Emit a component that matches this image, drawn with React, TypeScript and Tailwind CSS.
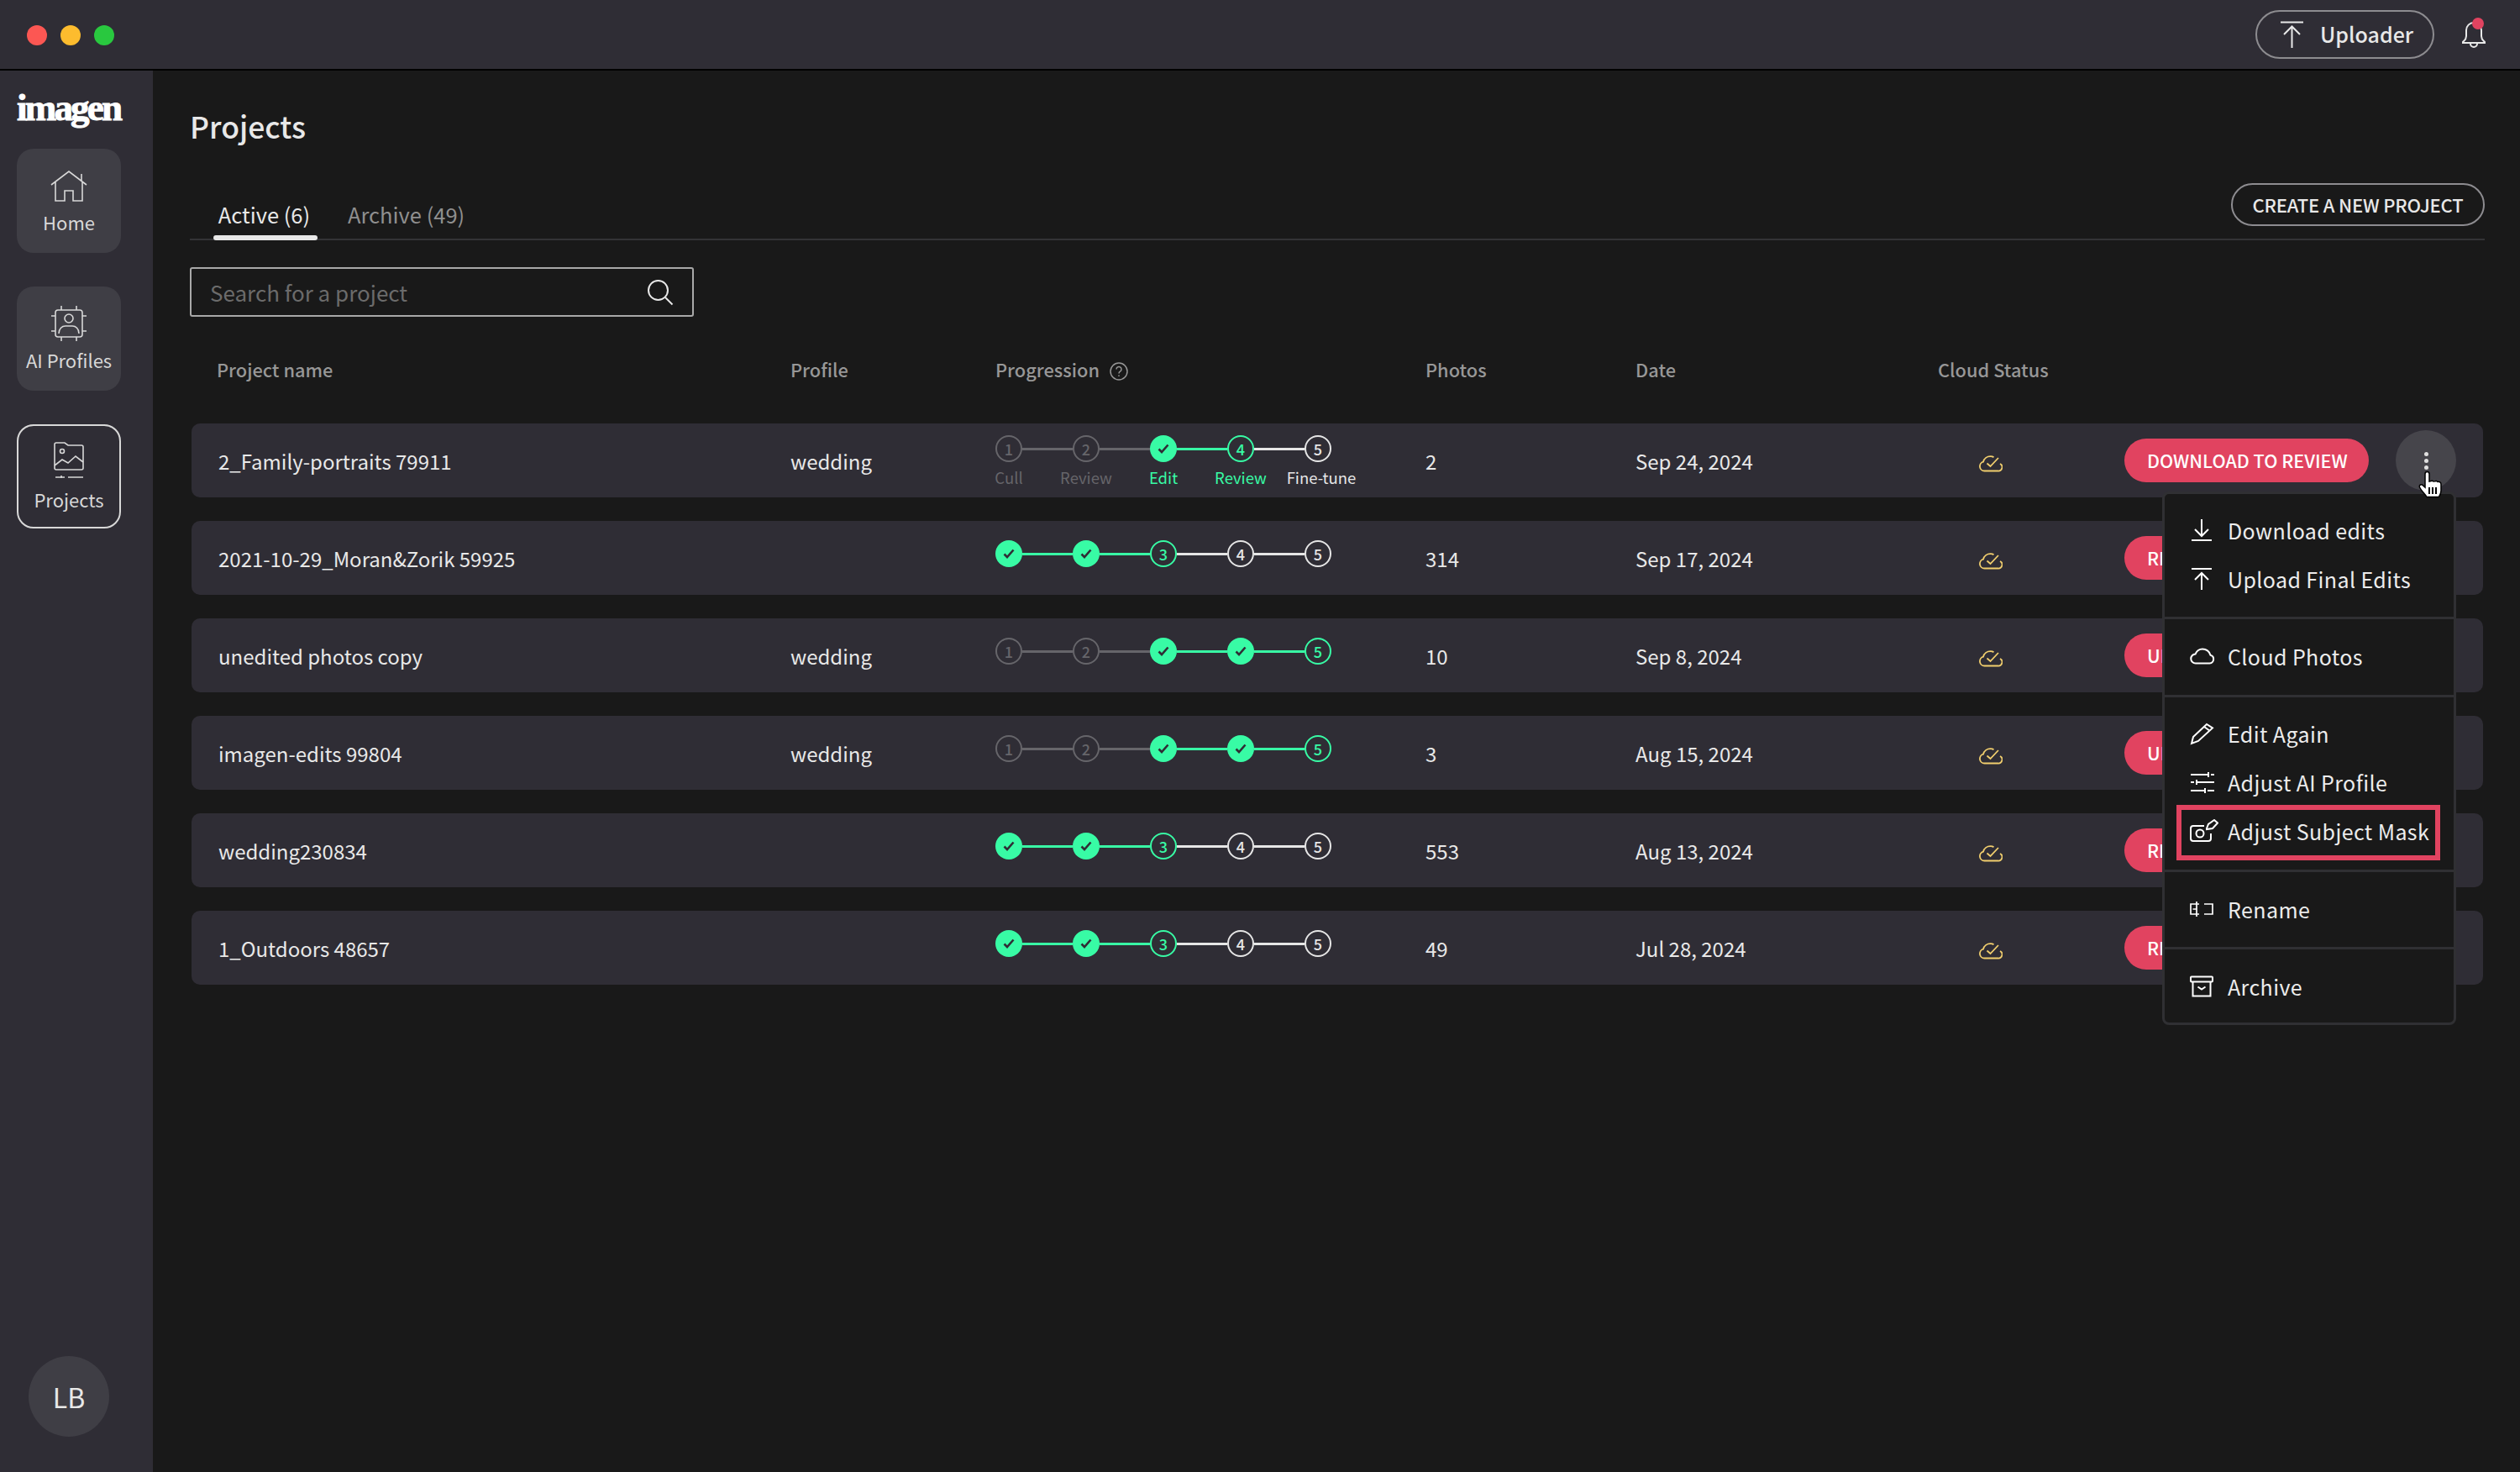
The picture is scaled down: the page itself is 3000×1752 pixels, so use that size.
import type { ReactNode } from "react";

const headCols = "grid grid-cols-[715px_244px_512px_250px_360px_222px_1fr] items-center";
const rowCols = "grid grid-cols-[713px_244px_512px_250px_360px_222px_1fr] items-center";

type StepState = "off" | "done" | "now" | "todo";

const rows = [
  { name: "2_Family-portraits 79911", profile: "wedding", steps: ["off", "off", "done", "now", "todo"], photos: "2", date: "Sep 24, 2024", action: "DOWNLOAD TO REVIEW", labels: true },
  { name: "2021-10-29_Moran&Zorik 59925", profile: "", steps: ["done", "done", "now", "todo", "todo"], photos: "314", date: "Sep 17, 2024", action: "REVIEW" },
  { name: "unedited photos copy", profile: "wedding", steps: ["off", "off", "done", "done", "now"], photos: "10", date: "Sep 8, 2024", action: "UPLOAD" },
  { name: "imagen-edits 99804", profile: "wedding", steps: ["off", "off", "done", "done", "now"], photos: "3", date: "Aug 15, 2024", action: "UPLOAD" },
  { name: "wedding230834", profile: "", steps: ["done", "done", "now", "todo", "todo"], photos: "553", date: "Aug 13, 2024", action: "REVIEW" },
  { name: "1_Outdoors 48657", profile: "", steps: ["done", "done", "now", "todo", "todo"], photos: "49", date: "Jul 28, 2024", action: "REVIEW" },
] as { name: string; profile: string; steps: StepState[]; photos: string; date: string; action: string; labels?: boolean }[];

const stepLabels = ["Cull", "Review", "Edit", "Review", "Fine-tune"];

function Icon({ w, h, children, className, sw = 2 }: { w: number; h: number; children: ReactNode; className?: string; sw?: number }) {
  return (
    <svg width={w} height={h} viewBox={`0 0 ${w} ${h}`} fill="none" stroke="currentColor" strokeWidth={sw} className={className}>
      {children}
    </svg>
  );
}

function Step({ state, n }: { state: StepState; n: number }) {
  if (state === "done") {
    return (
      <div className="w-[32px] h-[32px] shrink-0 rounded-full bg-[#38fba5] flex items-center justify-center">
        <svg width="14" height="12" viewBox="0 0 14 12" fill="none" stroke="#2f2d35" strokeWidth="2.6"><path d="M1.5 6.5 5 10l7.5-8.5" /></svg>
      </div>
    );
  }
  const tone = state === "off" ? "border-[#66656a] text-[#66656a]" : state === "now" ? "border-[#38fba5] text-[#38fba5]" : "border-[#e6e6e6] text-[#e6e6e6]";
  return (
    <div className={`w-[32px] h-[32px] shrink-0 rounded-full border-[2px] flex items-center justify-center text-[18px] font-medium leading-none ${tone}`}>
      {n}
    </div>
  );
}

function Stepper({ steps, labels }: { steps: StepState[]; labels?: boolean }) {
  const line = (a: StepState, b: StepState) => {
    if (a === "off") return "bg-[#66656a]";
    if (b === "todo" && a !== "done") return "bg-[#e6e6e6]";
    if (a === "todo") return "bg-[#e6e6e6]";
    return "bg-[#38fba5]";
  };
  return (
    <div className={labels ? "self-start pt-[14px]" : "self-start pt-[23px]"}>
      <div className="flex items-center">
        {steps.map((s, i) => (
          <div key={i} className="flex items-center">
            <Step state={s} n={i + 1} />
            {i < 4 && <div className={`w-[60px] h-[3px] ${line(s, steps[i + 1])}`} />}
          </div>
        ))}
      </div>
      {labels && (
        <div className="flex ml-[-30px] mt-[2px] text-[18.500px] leading-[32px]">
          {stepLabels.map((l, i) => (
            <div
              key={i}
              className={`w-[92px] text-center whitespace-nowrap ${i < 2 ? "text-[#66656a]" : i < 4 ? "text-[#38fba5]" : "text-[#e6e6e6] pl-[8px]"}`}
            >
              {l}
            </div>
          ))}
        </div>
      )}
    </div>
  );
}

function CloudCheck() {
  return (
    <svg width="28" height="20" viewBox="0 0 28 20" fill="none" stroke="#f2cf6e" strokeWidth="1.8" className="mx-auto mt-[8px]">
      <path d="M6.500 18.500h16a4.500 4.500 0 0 0 2.500-8.500M6.500 18.500a5.500 5.500 0 0 1-1.500-10.800C6 4 9.500 1.200 13.500 1.200c1.500 0 3 .3 4 1" />
      <path d="m9.500 9.500 4 3.500 9.500-10" />
    </svg>
  );
}

function NavItem({ label, active, children }: { label: string; active?: boolean; children: ReactNode }) {
  return (
    <div className={`w-[124px] h-[124px] rounded-[20px] flex flex-col items-center justify-start text-[22px] leading-[30px] text-[#d8d8d8] ${active ? "pt-[18px] border-[2px] border-[#d8d8d8]" : "pt-[22px] bg-[#3f3e45]"}`}>
      <div className="h-[44px] flex items-center justify-center">{children}</div>
      <div className={`whitespace-nowrap ${active ? "mt-[10px]" : "mt-[6px]"}`}>{label}</div>
    </div>
  );
}

function MenuItem({ label, icon, boxed }: { label: string; icon: ReactNode; boxed?: boolean }) {
  return (
    <div className="relative h-[58px] flex items-center pl-[30px] gap-[13px] text-[25px] tracking-[0.4px] text-[#ececec] whitespace-nowrap">
      <div className="w-[32px] h-[32px] flex items-center justify-start shrink-0">{icon}</div>
      <span className="pt-[2px]">{label}</span>
      {boxed && <div className="absolute left-[14px] top-[-2px] w-[314px] h-[66px] border-[6px] border-[#e14360]" />}
    </div>
  );
}

function Menu() {
  const divider = "border-b-[3px] border-[#303033]";
  return (
    <div className="absolute right-[76px] top-[501px] w-[350px] h-[635px] bg-[#191919] border-[3px] border-[#303033] rounded-[8px]">
      <div className={`pt-[14px] pb-[16px] ${divider}`}>
        <MenuItem label="Download edits" icon={<Icon w={28} h={28} className="text-white"><path d="M14 1v19M6 13l8 8 8-8M2 26h24" /></Icon>} />
        <MenuItem label="Upload Final Edits" icon={<Icon w={28} h={28} className="text-white"><path d="M2 2h24M14 27V8M6 15l8-8 8 8" /></Icon>} />
      </div>
      <div className={`pt-[15px] pb-[17px] ${divider}`}>
        <MenuItem label="Cloud Photos" icon={<Icon w={30} h={20} className="text-white"><path d="M7 18.500h16.500a5 5 0 0 0 1-9.800C23 4 19 1.500 15 1.500c-4 0-7 2.500-8.500 6A5.500 5.500 0 0 0 7 18.500Z" /></Icon>} />
      </div>
      <div className={`pt-[14px] pb-[17px] ${divider}`}>
        <MenuItem label="Edit Again" icon={<Icon w={30} h={28} className="text-white"><path d="M2 26l2-8L20 3l7 4.500L10 23l-8 3ZM17 6l7 5" /></Icon>} />
        <MenuItem label="Adjust AI Profile" icon={<Icon w={30} h={26} className="text-white"><path d="M1 4h20M25 4h4M22 1v6M1 13h4M9 13h20M8 10v6M1 23h16M21 23h8M18 20v6" /></Icon>} />
        <MenuItem
          boxed
          label="Adjust Subject Mask"
          icon={<Icon w={34} h={28} className="text-white shrink-0"><path d="M17 8H4a3 3 0 0 0-3 3v12a3 3 0 0 0 3 3h18a3 3 0 0 0 3-3v-6" /><circle cx="12" cy="17" r="4.500" /><path d="m20 11 2-5 7-5 4 3.500-6 6.500-7 1Z" /></Icon>}
        />
      </div>
      <div className={`pt-[15px] pb-[16px] ${divider}`}>
        <MenuItem label="Rename" icon={<Icon w={28} h={20} sw={1.700} className="text-white"><path d="M11 4H1v12h10M17 4h10v12H17M8 1v18M3.500 10H8" /></Icon>} />
      </div>
      <div className="pt-[15px]">
        <MenuItem label="Archive" icon={<Icon w={28} h={26} className="text-white"><rect x="1" y="1.500" width="26" height="6" rx="1" /><path d="M3.500 8v16.500h21V8M9.500 13.500l4.500 3 4.500-3" /></Icon>} />
      </div>
    </div>
  );
}

function HandCursor() {
  return (
    <svg width="30" height="34" viewBox="0 0 30 34" className="absolute right-[92px] top-[476px]" stroke="#000" strokeWidth="1.500">
      <path fill="#fff" d="M9 20 V4 a2.500 2.500 0 0 1 5 0 V13 l2-.5a2.500 2.500 0 0 1 3 .5 l2-.3a2.500 2.500 0 0 1 3 .8 c2-.5 4 .5 4 3 V24 c0 3-1 5-2.500 7.500 H11 C9 28 5 25 2.500 20 c-1-2 1-4 3-3 Z" />
      <path d="M14 20v8M18 20v8M22 20v8" fill="none" strokeWidth="2" />
    </svg>
  );
}

export default function App() {
  return (
    <div className="w-[3000px] h-[1752px] flex flex-col overflow-hidden bg-[#191919] text-[#e8e8e8] font-['Noto_Sans_CJK_JP',sans-serif]">
      <header className="h-[84px] shrink-0 bg-[#2f2d35] border-b-[2px] border-black flex items-center pl-[32px] pr-[41px]">
        <div className="flex gap-[16px] mt-[2px]">
          <div className="w-[24px] h-[24px] rounded-full bg-[#fc5753]" />
          <div className="w-[24px] h-[24px] rounded-full bg-[#fdbc2e]" />
          <div className="w-[24px] h-[24px] rounded-full bg-[#29c83f]" />
        </div>
        <div className="ml-auto h-[58px] w-[213px] rounded-full border-[2px] border-[#8d8c90] flex items-center pl-[27px] gap-[20px] text-[25px] font-medium text-[#e8e8e8]">
          <Icon w={28} h={32}><path d="M1 1.500h27M14.500 32V7M5 16l9.500-9.500L24 16" /></Icon>
          <span>Uploader</span>
        </div>
        <div className="relative ml-[33px] w-[28px] h-[34px]">
          <svg width="28" height="34" viewBox="0 0 28 34" fill="none" stroke="#e8e8e8" strokeWidth="2">
            <path d="M1 26c2-2 4-3 4-7v-7c0-5 4-9 9-9s9 4 9 9v7c0 4 2 5 4 7v1H1ZM10 28a4 4 0 0 0 8 0" />
          </svg>
          <div className="absolute right-[2px] top-[-3px] w-[14px] h-[14px] rounded-full bg-[#e14360]" />
        </div>
      </header>

      <div className="flex-1 flex min-h-0">
        <aside className="w-[182px] shrink-0 bg-[#2f2d35] flex flex-col px-[20px]">
          <div className="h-[44px] mt-[24px] mb-[25px] font-['Liberation_Serif',serif] font-bold text-[45px] leading-[40px] tracking-[-2.800px] [-webkit-text-stroke:1px_white] text-white whitespace-nowrap">imagen</div>
          <div className="flex flex-col gap-[40px]">
            <NavItem label="Home">
              <Icon w={44} h={38} sw={1.600}><path d="M1 18 22 2l21 16M6 14v23h11V25h10v12h11V14M37 13V5" /></Icon>
            </NavItem>
            <NavItem label="AI Profiles">
              <Icon w={44} h={44} sw={1.600}>
                <rect x="6" y="6" width="32" height="32" rx="3" />
                <path d="M13 1v5M31 1v5M13 38v5M31 38v5M1 13h5M1 31h5M38 13h5M38 31h5" />
                <circle cx="22" cy="16" r="5" />
                <path d="M10 34c0-6 4-9 8-9h8c4 0 8 3 8 9" />
              </Icon>
            </NavItem>
            <NavItem label="Projects" active>
              <Icon w={38} h={44} sw={1.600}>
                <path d="M2 4a2 2 0 0 1 2-2h10l4 3h16a2 2 0 0 1 2 2v25a2 2 0 0 1-2 2H4a2 2 0 0 1-2-2Z" />
                <circle cx="11" cy="12" r="2.500" />
                <path d="M2 29l9-7 7 4 9-8 9 7M3 43h11M18 43h18M10 41v4" />
              </Icon>
            </NavItem>
          </div>
          <div className="mt-auto mb-[42px] ml-[14px] w-[96px] h-[96px] rounded-full bg-[#3f3e45] flex items-center justify-center text-[32px] text-[#e8e8e8]">LB</div>
        </aside>

        <main className="relative flex-1 pl-[44px] pr-[42px] min-w-0">
          <h1 className="mt-[42px] h-[50px] text-[35.500px] leading-[48px] font-medium text-[#e8e8e8]">Projects</h1>

          <div className="h-[110px] border-b-[2px] border-[#333336] flex items-end justify-between">
            <div className="flex items-end gap-[36px] ml-[28px] mb-[-2px]">
              <div className="w-[124px] flex flex-col items-center text-[25.500px] leading-[38px] text-[#e8e8e8]">
                <span className="whitespace-nowrap mr-[3px]">Active (6)</span>
                <div className="mt-[6px] w-full h-[6px] rounded-full bg-[#e8e8e8]" />
              </div>
              <div className="text-[25.500px] leading-[38px] pb-[12px] text-[#8f8f8f] whitespace-nowrap">Archive (49)</div>
            </div>
            <div className="mb-[15px] w-[302px] h-[51px] rounded-full border-[2px] border-[#8d8c90] flex items-center justify-center text-[22px] tracking-[-0.2px] font-medium text-[#e8e8e8] whitespace-nowrap">
              CREATE A NEW PROJECT
            </div>
          </div>

          <div className="mt-[32px] w-[600px] h-[59px] border-[2px] border-[#a8a8a8] rounded-[3px] flex items-center justify-between pl-[22px] pr-[22px]">
            <span className="text-[26px] text-[#6b6b6b]">Search for a project</span>
            <svg width="32" height="32" viewBox="0 0 32 32" fill="none" stroke="#e8e8e8" strokeWidth="2"><circle cx="13.500" cy="13.500" r="11.500" /><path d="m22 22 8.500 8.500" /></svg>
          </div>

          <div className={`${headCols} mt-[43px] h-[40px] text-[21.800px] font-medium text-[#979797]`}>
            <div className="pl-[32px]">Project name</div>
            <div>Profile</div>
            <div className="flex items-center gap-[12px]">
              Progression
              <svg width="22" height="22" viewBox="0 0 22 22" fill="none" stroke="#979797" strokeWidth="1.500" className="mt-[3px]">
                <circle cx="11" cy="11" r="10" />
                <path d="M8 8.500a3 3 0 1 1 4.500 2.600c-1 .6-1.500 1.200-1.500 2.400M11 15.500v1.500" />
              </svg>
            </div>
            <div>Photos</div>
            <div>Date</div>
            <div className="whitespace-nowrap">Cloud Status</div>
            <div />
          </div>

          <div className="mt-[44px] px-[2px] flex flex-col gap-[28px]">
            {rows.map((r, i) => (
              <div key={r.name} className={`${rowCols} h-[88px] rounded-[10px] bg-[#2f2d35] text-[24px] text-[#e8e8e8]`}>
                <div className="pl-[32px] pt-[2px] whitespace-nowrap">{r.name}</div>
                <div className="pt-[2px]">{r.profile}</div>
                <Stepper steps={r.steps} labels={r.labels} />
                <div className="pt-[2px]">{r.photos}</div>
                <div className="pt-[2px]">{r.date}</div>
                <div className="w-[126px]"><CloudCheck /></div>
                <div className="flex items-center gap-[32px]">
                  <div className="w-[291px] h-[52px] rounded-full bg-[#e14360] flex items-center pl-[27px] text-[21.500px] font-medium text-white whitespace-nowrap">{r.action}</div>
                  <div className={`w-[72px] h-[72px] rounded-full flex flex-col items-center justify-center gap-[3px] ${i === 0 ? "bg-[#46454b]" : ""}`}>
                    <div className="w-[5px] h-[5px] rounded-full bg-[#e0e0e0]" />
                    <div className="w-[5px] h-[5px] rounded-full bg-[#e0e0e0]" />
                    <div className="w-[5px] h-[5px] rounded-full bg-[#e0e0e0]" />
                  </div>
                </div>
              </div>
            ))}
          </div>

          <Menu />
          <HandCursor />
        </main>
      </div>
    </div>
  );
}
